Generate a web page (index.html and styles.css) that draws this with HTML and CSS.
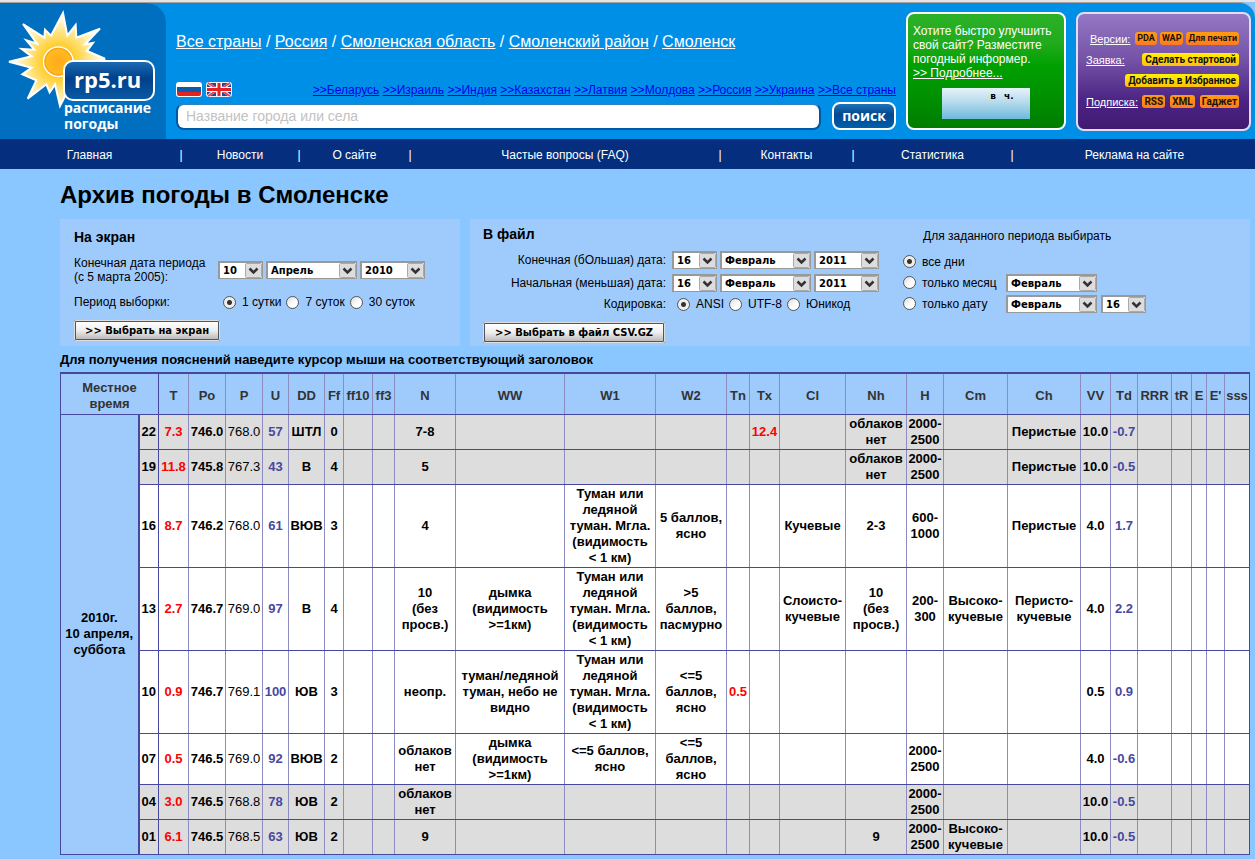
FILE: index.html
```html
<!DOCTYPE html>
<html lang="ru">
<head>
<meta charset="utf-8">
<title>Архив погоды в Смоленске</title>
<link rel="stylesheet" href="styles.css">
</head>
<body>
<header class="top">
  <a class="logo" href="#" aria-label="rp5.ru">
    <svg viewBox="0 0 166 136" width="166" height="136">
      <defs>
        <radialGradient id="ray" gradientUnits="userSpaceOnUse" cx="160" cy="170" r="130">
          <stop offset="0.3" stop-color="#ffc81e"/><stop offset="0.65" stop-color="#ffe27a"/><stop offset="1" stop-color="#fffbe6"/>
        </radialGradient>
        <linearGradient id="badge" x1="0" y1="0" x2="0" y2="1">
          <stop offset="0" stop-color="#1c6db5"/><stop offset="0.45" stop-color="#00408a"/><stop offset="1" stop-color="#0a5aa6"/>
        </linearGradient>
        <radialGradient id="core"><stop offset="0" stop-color="#ffa91a"/><stop offset="1" stop-color="#ffbe22"/></radialGradient>
      </defs>
      <g transform="translate(5 2) scale(.3333)">
        <path d="M174 24 187 92 212 60 214 98 285 71 240 118 264 114 246 138 298 160 298 190 200 236 165 303 150 238 134 262 124 238 68 281 94 226 52 208 80 188 12 170 80 154 50 132 88 134 64 106 96 116 54 57 118 98 120 74 138 92Z" fill="url(#ray)" stroke="#fff" stroke-width="6"/>
        <circle cx="160" cy="170" r="44" fill="url(#core)" stroke="#fff" stroke-width="5"/>
        <circle cx="160" cy="170" r="40" fill="none" stroke="#f9a21a" stroke-width="4"/>
      </g>
      <rect x="64" y="58" width="90" height="39" rx="9" fill="url(#badge)" stroke="#fff" stroke-width="2"/>
      <text x="74" y="85" class="logo-name">rp5.ru</text>
      <text class="logo-sub"><tspan x="64" y="110">расписание</tspan><tspan x="64" y="126">погоды</tspan></text>
    </svg>
  </a>
  <div class="main-head">
    <nav class="crumbs">
      <a href="#">Все страны</a> / <a href="#">Россия</a> / <a href="#">Смоленская область</a> / <a href="#">Смоленский район</a> / <a href="#">Смоленск</a>
    </nav>
    <div class="lang-row">
      <div class="flags">
        <a href="#" aria-label="Русский"><svg width="26" height="15" viewBox="0 0 26 15"><rect width="26" height="15" rx="3" fill="#fff"/><path d="M1 5h24v5H1z" fill="#0c5aa8"/><path d="M1 10h24v2q0 2-2 2H3q-2 0-2-2z" fill="#e2231f"/></svg></a>
        <a href="#" aria-label="English"><svg width="26" height="15" viewBox="0 0 26 15"><rect width="26" height="15" rx="3" fill="#f2eef6"/><path d="M4 1h6v4zM16 1h6l-6 4zM1 2l5 4H1zM25 2l-5 4h5zM1 9h5l-5 4zM20 9h5v4zM4 14l6-4v4zM16 10l6 4h-6z" fill="#24459c"/><path d="M2 1l8 5M24 1l-8 5M2 14l8-5M24 14l-8-5" stroke="#e2404a" stroke-width="1.500"/><path d="M13 1v13M1 7.500h24" stroke="#fff" stroke-width="5"/><path d="M13 1v13M1 7.500h24" stroke="#e2231f" stroke-width="3"/></svg></a>
      </div>
      <div class="countries">
        <a href="#">&gt;&gt;Беларусь</a> <a href="#">&gt;&gt;Израиль</a> <a href="#">&gt;&gt;Индия</a> <a href="#">&gt;&gt;Казахстан</a> <a href="#">&gt;&gt;Латвия</a> <a href="#">&gt;&gt;Молдова</a> <a href="#">&gt;&gt;Россия</a> <a href="#">&gt;&gt;Украина</a> <a href="#">&gt;&gt;Все страны</a>
      </div>
    </div>
    <form class="search">
      <input type="text" placeholder="Название города или села" aria-label="Название города или села">
      <button type="button">поиск</button>
    </form>
  </div>
  <aside class="card green">
    <p>Хотите быстро улучшить<br>свой сайт? Разместите<br>погодный информер.<br><a href="#">&gt;&gt; Подробнее...</a></p>
    <div class="informer"><span>в</span><span>ч.</span></div>
  </aside>
  <aside class="card purple">
    <div class="prow"><a class="plabel first" href="#">Версии:</a><span class="pills"><a class="pill small" href="#">PDA</a><a class="pill small" href="#">WAP</a><a class="pill small" href="#">Для печати</a></span></div>
    <div class="prow"><a class="plabel" href="#">Заявка:</a><span class="pills"><a class="pill yellow" href="#">Сделать стартовой</a></span></div>
    <div class="prow"><span class="pills"><a class="pill yellow" href="#">Добавить в Избранное</a></span></div>
    <div class="prow"><a class="plabel" href="#">Подписка:</a><span class="pills wide"><a class="pill" href="#">RSS</a><a class="pill" href="#">XML</a><a class="pill" href="#">Гаджет</a></span></div>
  </aside>
</header>
<nav class="menu">
  <a href="#">Главная</a><span>|</span><a href="#">Новости</a><span>|</span><a href="#">О сайте</a><span>|</span><a href="#">Частые вопросы (FAQ)</a><span>|</span><a href="#">Контакты</a><span>|</span><a href="#">Статистика</a><span>|</span><a href="#">Реклама на сайте</a>
</nav>
<main class="content">
  <h1>Архив погоды в Смоленске</h1>
  <div class="panels">
    <form class="panel screen">
      <h2>На экран</h2>
      <div class="line">
        <span class="lab">Конечная дата периода<br>(с 5 марта 2005):</span>
        <span class="selects"><select class="s-day" aria-label="День"><option>10</option></select><select class="s-month" aria-label="Месяц"><option>Апрель</option></select><select class="s-year" aria-label="Год"><option>2010</option></select></span>
      </div>
      <div class="line period">
        <span class="lab">Период выборки:</span>
        <span class="radios"><label><input type="radio" name="p" checked>1 сутки</label><label><input type="radio" name="p">7 суток</label><label><input type="radio" name="p">30 суток</label></span>
      </div>
      <button class="btn" type="button">&gt;&gt; Выбрать на экран</button>
    </form>
    <form class="panel file">
      <div class="file-left">
        <h2>В файл</h2>
        <div class="fgrid">
          <span class="lab">Конечная (бОльшая) дата:</span>
          <span class="selects"><select class="s-day" aria-label="День"><option>16</option></select><select class="s-month" aria-label="Месяц"><option>Февраль</option></select><select class="s-year" aria-label="Год"><option>2011</option></select></span>
          <span class="lab">Начальная (меньшая) дата:</span>
          <span class="selects"><select class="s-day" aria-label="День"><option>16</option></select><select class="s-month" aria-label="Месяц"><option>Февраль</option></select><select class="s-year" aria-label="Год"><option>2011</option></select></span>
          <span class="lab">Кодировка:</span>
          <span class="radios"><label><input type="radio" name="e" checked>ANSI</label><label><input type="radio" name="e">UTF-8</label><label><input type="radio" name="e">Юникод</label></span>
        </div>
        <button class="btn" type="button">&gt;&gt; Выбрать в файл CSV.GZ</button>
      </div>
      <div class="file-right">
        <p>Для заданного периода выбирать</p>
        <div class="choice"><label><input type="radio" name="d" checked>все дни</label></div>
        <div class="choice"><label><input type="radio" name="d">только месяц</label><select class="s-month" aria-label="Месяц"><option>Февраль</option></select></div>
        <div class="choice"><label><input type="radio" name="d">только дату</label><select class="s-month" aria-label="Месяц"><option>Февраль</option></select><select class="s-day" aria-label="День"><option>16</option></select></div>
      </div>
    </form>
  </div>
  <p class="hint">Для получения пояснений наведите курсор мыши на соответствующий заголовок</p>
  <table class="arch">
    <colgroup><col class="w78"><col class="w20"><col class="w30"><col class="w37"><col class="w37"><col class="w26"><col class="w36"><col class="w19"><col class="w29"><col class="w22"><col class="w61"><col class="w109"><col class="w91"><col class="w71"><col class="w23"><col class="w30"><col class="w66"><col class="w61"><col class="w37"><col class="w64"><col class="w73"><col class="w30"><col class="w27"><col class="w34"><col class="w20"><col class="w15"><col class="w18"><col class="w25"></colgroup>
    <thead><tr><th class="time" colspan="2">Местное<br>время</th><th>T</th><th>Po</th><th>P</th><th>U</th><th>DD</th><th>Ff</th><th>ff10</th><th>ff3</th><th>N</th><th>WW</th><th>W1</th><th>W2</th><th>Tn</th><th>Tx</th><th>Cl</th><th>Nh</th><th>H</th><th>Cm</th><th>Ch</th><th>VV</th><th>Td</th><th>RRR</th><th>tR</th><th>E</th><th>E'</th><th>sss</th></tr></thead>
    <tbody>
      <tr class="night"><th class="date" rowspan="8">2010г.<br>10 апреля,<br>суббота</th><td class="hour">22</td><td class="red">7.3</td><td>746.0</td><td class="thin">768.0</td><td class="blue">57</td><td>ШТЛ</td><td>0</td><td></td><td></td><td>7-8</td><td></td><td></td><td></td><td></td><td class="red">12.4</td><td></td><td>облаков нет</td><td>2000-<br>2500</td><td></td><td>Перистые</td><td>10.0</td><td class="blue">-0.7</td><td></td><td></td><td></td><td></td><td></td></tr>
      <tr class="night"><td class="hour">19</td><td class="red">11.8</td><td>745.8</td><td class="thin">767.3</td><td class="blue">43</td><td>В</td><td>4</td><td></td><td></td><td>5</td><td></td><td></td><td></td><td></td><td></td><td></td><td>облаков нет</td><td>2000-<br>2500</td><td></td><td>Перистые</td><td>10.0</td><td class="blue">-0.5</td><td></td><td></td><td></td><td></td><td></td></tr>
      <tr><td class="hour">16</td><td class="red">8.7</td><td>746.2</td><td class="thin">768.0</td><td class="blue">61</td><td>ВЮВ</td><td>3</td><td></td><td></td><td>4</td><td></td><td>Туман или<br>ледяной<br>туман. Мгла.<br>(видимость<br>&lt; 1 км)</td><td>5 баллов,<br>ясно</td><td></td><td></td><td>Кучевые</td><td>2-3</td><td>600-<br>1000</td><td></td><td>Перистые</td><td>4.0</td><td class="blue">1.7</td><td></td><td></td><td></td><td></td><td></td></tr>
      <tr><td class="hour">13</td><td class="red">2.7</td><td>746.7</td><td class="thin">769.0</td><td class="blue">97</td><td>В</td><td>4</td><td></td><td></td><td>10<br>(без<br>просв.)</td><td>дымка<br>(видимость<br>&gt;=1км)</td><td>Туман или<br>ледяной<br>туман. Мгла.<br>(видимость<br>&lt; 1 км)</td><td>&gt;5<br>баллов,<br>пасмурно</td><td></td><td></td><td>Слоисто-<br>кучевые</td><td>10<br>(без<br>просв.)</td><td>200-<br>300</td><td>Высоко-<br>кучевые</td><td>Перисто-<br>кучевые</td><td>4.0</td><td class="blue">2.2</td><td></td><td></td><td></td><td></td><td></td></tr>
      <tr><td class="hour">10</td><td class="red">0.9</td><td>746.7</td><td class="thin">769.1</td><td class="blue">100</td><td>ЮВ</td><td>3</td><td></td><td></td><td>неопр.</td><td>туман/ледяной<br>туман, небо не<br>видно</td><td>Туман или<br>ледяной<br>туман. Мгла.<br>(видимость<br>&lt; 1 км)</td><td>&lt;=5<br>баллов,<br>ясно</td><td class="red">0.5</td><td></td><td></td><td></td><td></td><td></td><td></td><td>0.5</td><td class="blue">0.9</td><td></td><td></td><td></td><td></td><td></td></tr>
      <tr><td class="hour">07</td><td class="red">0.5</td><td>746.5</td><td class="thin">769.0</td><td class="blue">92</td><td>ВЮВ</td><td>2</td><td></td><td></td><td>облаков нет</td><td>дымка<br>(видимость<br>&gt;=1км)</td><td>&lt;=5 баллов,<br>ясно</td><td>&lt;=5<br>баллов,<br>ясно</td><td></td><td></td><td></td><td></td><td>2000-<br>2500</td><td></td><td></td><td>4.0</td><td class="blue">-0.6</td><td></td><td></td><td></td><td></td><td></td></tr>
      <tr class="night"><td class="hour">04</td><td class="red">3.0</td><td>746.5</td><td class="thin">768.8</td><td class="blue">78</td><td>ЮВ</td><td>2</td><td></td><td></td><td>облаков нет</td><td></td><td></td><td></td><td></td><td></td><td></td><td></td><td>2000-<br>2500</td><td></td><td></td><td>10.0</td><td class="blue">-0.5</td><td></td><td></td><td></td><td></td><td></td></tr>
      <tr class="night"><td class="hour">01</td><td class="red">6.1</td><td>746.5</td><td class="thin">768.5</td><td class="blue">63</td><td>ЮВ</td><td>2</td><td></td><td></td><td>9</td><td></td><td></td><td></td><td></td><td></td><td></td><td>9</td><td>2000-<br>2500</td><td>Высоко-<br>кучевые</td><td></td><td>10.0</td><td class="blue">-0.5</td><td></td><td></td><td></td><td></td><td></td></tr>
    </tbody>
  </table>
</main>
</body>
</html>
```

FILE: styles.css
```css
* { box-sizing: border-box; }
body {
  margin: 0;
  border-top: 2px solid #e4e4e4;
  background: #8ac6ff;
  color: #000;
  font: 12px/14px "Liberation Sans", Arial, sans-serif;
}
h1, h2, p { margin: 0; }

/* Header */
.top {
  display: flex;
  height: 137px;
  padding-right: 4px;
  background: #008fe7;
  border-top: 1px solid #a8a09c;
  border-top-right-radius: 16px;
}
.logo { flex: none; width: 166px; background: #006fc0; border-top-right-radius: 20px; }
.logo svg { display: block; }
.logo-name { font: bold 22px "Open Sans", sans-serif; fill: #fff; }
.logo-sub { font: bold 14px "Open Sans", sans-serif; fill: #fff; }
.main-head {
  flex: 1;
  min-width: 0;
  display: flex;
  flex-direction: column;
  padding: 29px 10px 9px 10px;
}
.crumbs { color: #fff; font-size: 16px; line-height: 20px; white-space: nowrap; }
.crumbs a { color: #fff; }
.lang-row { display: flex; justify-content: space-between; height: 20px; margin-top: auto; }
.flags { display: flex; gap: 4px; }
.flags svg { display: block; }
.countries { padding-top: 1px; white-space: nowrap; }
.countries a { color: #00e; }
.search { display: flex; gap: 11px; align-items: center; }
.search input {
  flex: 1;
  min-width: 0;
  height: 27px;
  padding: 0 8px;
  border: 2px solid #0057a5;
  border-top-color: #2f7fc4;
  border-radius: 8px;
  background: #fff;
  font: 14px "Liberation Sans", Arial, sans-serif;
}
.search input::placeholder { color: #c2c2c2; }
.search button {
  width: 64px;
  height: 28px;
  padding: 0 0 2px;
  border: 2px solid #fff;
  border-radius: 8px;
  background: linear-gradient(#1e72b8, #00478f 45%, #0060ab);
  color: #fff;
  font: bold 14px "Open Sans", sans-serif;
}
.card { flex: none; margin-top: 9px; border: 2px solid #fff; border-radius: 8px; }
.green {
  width: 160px;
  height: 118px;
  padding: 10px 5px;
  background: linear-gradient(#2bb127, #22ab1e 25%, #00a000 45%, #008f00 75%, #007c00);
  color: #fff;
}
.green p { white-space: nowrap; }
.green a, .plabel { color: #fff; }
.informer {
  display: flex;
  justify-content: center;
  gap: 8px;
  width: 88px;
  height: 31px;
  margin: 8px 0 0 29px;
  padding: 2px 0 0 32px;
  background: linear-gradient(#e6f3fa, #b8dbec 45%, #6cbadc);
  color: #000;
  font: bold 9px/12px "DejaVu Sans", sans-serif;
}
.purple {
  width: 175px;
  height: 119px;
  margin-left: 10px;
  padding: 14px 10px 0 8px;
  border-color: #e6dcf2;
  background: linear-gradient(#9478c4, #7452a6 40%, #4c2484 75%, #401a72);
}
.prow { display: flex; align-items: center; justify-content: flex-end; gap: 4px; height: 21px; white-space: nowrap; }
.plabel { margin-right: auto; font-size: 11px; }
.plabel.first { margin-left: 4px; }
.pills { display: flex; gap: 3px; }
.pills.wide { gap: 5px; }
.pill {
  height: 13px;
  padding: 0 2px;
  border-radius: 3px;
  background: linear-gradient(#ff9c10, #ff7a20);
  color: #1c1208;
  font: bold 10px/13px Roboto, sans-serif;
  text-decoration: none;
}
.pill.small { font-size: 9px; }
.pill.yellow { padding: 0 3px; background: linear-gradient(#fff200, #ffbe10); color: #101010; }

/* Menu */
.menu {
  display: grid;
  grid-template-columns: 179fr 4px 114fr 4px 107fr 4px 306fr 4px 129fr 4px 155fr 4px 241fr;
  height: 30px;
  padding-top: 1px;
  align-items: center;
  text-align: center;
  background: #052f7e;
  color: #fff;
}
.menu a { color: #fff; text-decoration: none; }

/* Filters */
.content { padding: 12px 5px 4px 60px; }
h1 { font-size: 24px; line-height: 28px; }
h2 { font-size: 14px; line-height: 16px; }
.panels { display: grid; grid-template-columns: 400fr 780fr; gap: 10px; margin-top: 10px; }
.panel { height: 127px; background: #9fcbfc; white-space: nowrap; }
.screen { padding: 10px 14px 0; }
.file { display: flex; padding: 7px 13px 0; }
.line { display: flex; align-items: center; margin-top: 11px; }
.line .lab { width: 144px; }
.period { margin-top: 11px; }
.screen .btn { margin-top: 11px; }
.selects { display: flex; gap: 3px; }
.radios { display: flex; gap: 5px; padding-left: 5px; }
label { display: flex; align-items: center; gap: 6px; }
.fgrid { display: grid; grid-template-columns: 183px auto; column-gap: 6px; row-gap: 5px; margin-top: 9px; align-items: center; }
.fgrid .lab { text-align: right; }
.file-left .btn { margin-top: 11px; padding: 0 10px; }
.file-right { margin-left: 24px; padding-top: 3px; }
.file-right p { padding-left: 20px; margin-bottom: 8px; }
.choice { display: flex; align-items: center; gap: 4px; height: 21px; }
.choice label { width: 99px; }
select {
  appearance: none;
  height: 18px;
  padding: 0 3px;
  border: 2px solid #999;
  border-right-width: 1px;
  border-bottom-width: 1px;
  border-radius: 0;
  color: #000;
  font: bold 10px "DejaVu Sans", Verdana, sans-serif;
  background: #fff url("data:image/svg+xml,%3Csvg xmlns='http://www.w3.org/2000/svg' width='17' height='15'%3E%3Crect x='.5' y='.5' width='16' height='14' rx='1' fill='%23ddd' stroke='%23aaa'/%3E%3Cpath d='M4.500 5.500l4 4 4-4' fill='none' stroke='%23333' stroke-width='2.500'/%3E%3C/svg%3E") right center no-repeat;
}
.s-day { width: 45px; }
.s-month { width: 91px; }
.s-year { width: 65px; }
input[type="radio"] {
  appearance: none;
  flex: none;
  width: 13px;
  height: 13px;
  margin: 0;
  border: 1px solid #555;
  border-radius: 50%;
  background: linear-gradient(135deg, #ddd, #fff 60%);
}
input[type="radio"]:checked { background: radial-gradient(circle, #333 2px, #eee 3px); }
.btn {
  display: block;
  height: 21px;
  padding: 0 9px;
  border: 2px solid #555;
  border-radius: 2px;
  background: linear-gradient(#fff, #eee 50%, #bbb);
  outline: 1px solid #ddd;
  outline-offset: -1px;
  color: #000;
  font: bold 10px "DejaVu Sans", Verdana, sans-serif;
}
.hint { margin: 5px 0 4px; font-size: 13px; line-height: 17px; font-weight: bold; }

/* Archive table */
.arch {
  width: 100%;
  table-layout: fixed;
  border-collapse: collapse;
  border: 1px solid #4648a0;
  border-top-width: 2px;
  background: #fff;
  font-size: 13px;
  line-height: 16px;
  font-weight: bold;
  text-align: center;
}
.arch th, .arch td {
  padding: 1px 0;
  border: 1px solid #4648a0;
  border-left-color: #8c8cc0;
  border-right-color: #8c8cc0;
}
.arch thead th { height: 41px; padding: 4px 0 0; background: #9fcbfc; color: #333; white-space: nowrap; }
.arch thead th.time, .arch td.hour, .arch tr > :last-child { border-right-color: #4648a0; }
.arch thead th.time { border-left-color: #4648a0; }
.arch .date { background: #9fcbfc; border-left-color: #4648a0; border-right: 2px solid #4648a0; }
.night td { background: #ddd; }
.arch .thin { font-weight: normal; }
.arch .red { color: #f00; }
.arch .blue { color: #4648a0; }
.w15 { width: 15px; } .w18 { width: 18px; } .w19 { width: 19px; } .w20 { width: 20px; }
.w22 { width: 22px; } .w23 { width: 23px; } .w25 { width: 25px; } .w26 { width: 26px; }
.w27 { width: 27px; } .w29 { width: 29px; } .w30 { width: 30px; } .w34 { width: 34px; }
.w36 { width: 36px; } .w37 { width: 37px; } .w61 { width: 61px; } .w64 { width: 64px; }
.w66 { width: 66px; } .w71 { width: 71px; } .w73 { width: 73px; } .w78 { width: 78px; }
.w91 { width: 91px; } .w109 { width: 109px; }
```
